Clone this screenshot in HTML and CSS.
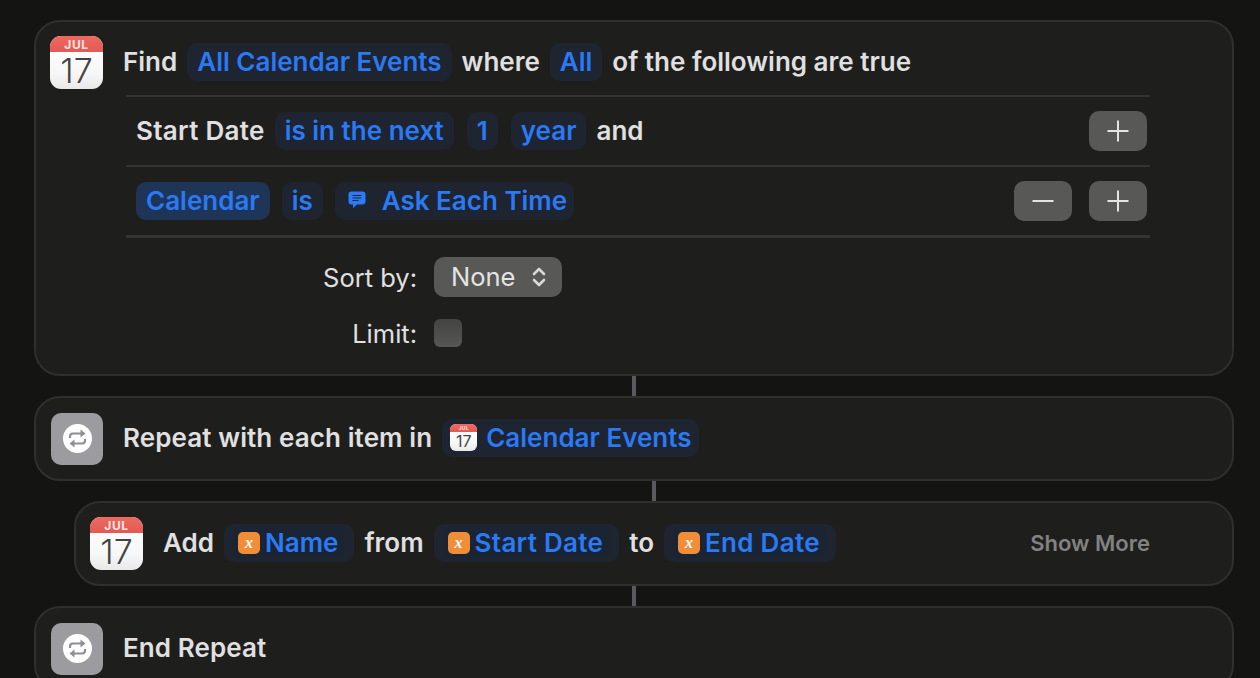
FILE: index.html
```html
<!DOCTYPE html>
<html lang="en">
<head>
    <meta charset="UTF-8">
    <meta name="viewport" content="width=device-width, initial-scale=1.0">
    <title>Shortcut</title>
    <link rel="stylesheet" href="styles.css">
</head>
<body>
    <div class="page">
        <!-- Find step -->
        <div class="card card-find">
            <div class="line line-head">
                <div class="cal">
                    <div class="cal-top">JUL</div>
                    <div class="cal-day">17</div>
                </div>
                <div class="words">
                    <span>Find</span>
                    <span class="chip">All Calendar Events</span>
                    <span>where</span>
                    <span class="chip">All</span>
                    <span>of the following are true</span>
                </div>
            </div>
            <div class="filters">
                <div class="filter">
                    <div class="words words-roomy">
                        <span class="wide">Start Date</span>
                        <span class="chip">is in the next</span>
                        <span class="chip">1</span>
                        <span class="chip">year</span>
                        <span>and</span>
                    </div>
                    <div class="buttons">
                        <button class="square-btn"><svg width="22" height="22" viewBox="0 0 22 22"><path d="M11 0.5v21M0.5 11h21" stroke="#e4e4e4" stroke-width="2"/></svg></button>
                    </div>
                </div>
                <div class="filter">
                    <div class="words">
                        <span class="chip chip-on">Calendar</span>
                        <span class="chip">is</span>
                        <span class="chip chip-ask">
                            <svg class="bubble" width="18" height="18" viewBox="0 0 18 18"><path d="M3.5 0.5h11a3 3 0 0 1 3 3v7a3 3 0 0 1-3 3H9l-4 3.8v-3.8H3.5a3 3 0 0 1-3-3v-7a3 3 0 0 1 3-3z" fill="#2c7bf6"/><path d="M4.5 4.5h9M4.5 7h9M4.5 9.5h6" stroke="#1e2532" stroke-width="1.1"/></svg>
                            Ask Each Time
                        </span>
                    </div>
                    <div class="buttons">
                        <button class="square-btn"><svg width="22" height="22" viewBox="0 0 22 22"><path d="M0.5 11h21" stroke="#e4e4e4" stroke-width="2"/></svg></button>
                        <button class="square-btn"><svg width="22" height="22" viewBox="0 0 22 22"><path d="M11 0.5v21M0.5 11h21" stroke="#e4e4e4" stroke-width="2"/></svg></button>
                    </div>
                </div>
            </div>
            <div class="option option-sort">
                <div class="option-label">Sort by:</div>
                <div class="select">
                    <span class="select-text">None</span>
                    <svg width="16" height="24" viewBox="0 0 16 24"><path d="M3 9l5-5 5 5M3 15l5 5 5-5" fill="none" stroke="#d8d8d8" stroke-width="2.6" stroke-linecap="round" stroke-linejoin="round"/></svg>
                </div>
            </div>
            <div class="option option-limit">
                <div class="option-label">Limit:</div>
                <div class="checkbox"></div>
            </div>
        </div>

        <div class="link"></div>

        <div class="card">
            <div class="line">
                <div class="repeat-icon">
                    <svg width="29" height="29" viewBox="0 0 29 29"><circle cx="14.5" cy="14.5" r="14.5" fill="#fff"/><path d="M7 14v-1.5a3 3 0 0 1 3-3h9" fill="none" stroke="#8e8e93" stroke-width="2.2"/><path d="M17.5 5.5l5 4-5 4z" fill="#8e8e93"/><path d="M22 15v1.5a3 3 0 0 1-3 3h-9" fill="none" stroke="#8e8e93" stroke-width="2.2"/><path d="M11.5 15.5l-5 4 5 4z" fill="#8e8e93"/></svg>
                </div>
                <div class="words">
                    <span class="step-title">Repeat with each item in</span>
                    <span class="chip chip-events">
                        <span class="cal cal-small">
                            <span class="cal-top">JUL</span>
                            <span class="cal-day">17</span>
                        </span>
                        Calendar Events
                    </span>
                </div>
            </div>
        </div>

        <div class="link link-nested"></div>

        <div class="card card-nested">
            <div class="line">
                <div class="cal">
                    <div class="cal-top">JUL</div>
                    <div class="cal-day">17</div>
                </div>
                <div class="words">
                    <span>Add</span>
                    <span class="chip"><span class="var-inner"><span class="var-icon">x</span>Name</span></span>
                    <span>from</span>
                    <span class="chip"><span class="var-inner wide"><span class="var-icon">x</span>Start Date</span></span>
                    <span>to</span>
                    <span class="chip"><span class="var-inner wide"><span class="var-icon">x</span>End Date</span></span>
                </div>
                <div class="show-more">Show More</div>
            </div>
        </div>

        <div class="link"></div>

        <div class="card">
            <div class="line">
                <div class="repeat-icon">
                    <svg width="29" height="29" viewBox="0 0 29 29"><circle cx="14.5" cy="14.5" r="14.5" fill="#fff"/><path d="M7 14v-1.5a3 3 0 0 1 3-3h9" fill="none" stroke="#8e8e93" stroke-width="2.2"/><path d="M17.5 5.5l5 4-5 4z" fill="#8e8e93"/><path d="M22 15v1.5a3 3 0 0 1-3 3h-9" fill="none" stroke="#8e8e93" stroke-width="2.2"/><path d="M11.5 15.5l-5 4 5 4z" fill="#8e8e93"/></svg>
                </div>
                <div class="words">
                    <span class="step-title">End Repeat</span>
                </div>
            </div>
        </div>
    </div>
</body>
</html>
```

FILE: styles.css
```css
* {
    box-sizing: border-box;
}
html, body {
    height: 100%;
    overflow: hidden;
}
body {
    margin: 0;
    background-color: #141413;
    font-family: Inter, 'Liberation Sans', sans-serif;
    font-size: 26px;
    font-weight: 600;
    color: #e0e0e0;
}
.page {
    padding: 20px 26px 0 34px;
}
.card {
    height: 85px;
    background-color: #1e1e1d;
    border: 2px solid #2f2f2e;
    border-radius: 26px;
    padding: 0 14px;
    display: flex;
    align-items: center;
}
.card-find {
    display: block;
    height: 356px;
    padding-top: 14px;
}
.card-nested {
    margin-left: 40px;
}
.link {
    width: 4px;
    height: 20px;
    margin-left: 598px;
    background-color: #5a5a5e;
}
.link-nested {
    margin-left: 618px;
}
.line {
    display: flex;
    align-items: center;
    width: 100%;
}
.line-head {
    height: 53px;
}
.words {
    display: flex;
    align-items: center;
    gap: 10px;
    white-space: nowrap;
}
.line .words {
    margin-left: 20px;
    margin-bottom: 2px;
}
.filter .words > span {
    padding-bottom: 2px;
}
.step-title {
    letter-spacing: 0.1px;
}
.wide {
    letter-spacing: 0.3px;
}
.chip {
    display: flex;
    align-items: center;
    height: 38px;
    padding: 0 10px;
    border-radius: 10px;
    background-color: #1e2430;
    color: #2b7af5;
    font-weight: 600;
}
.chip + .chip {
    margin-left: 2px;
}
.words-roomy .chip + .chip {
    margin-left: 3px;
}
.chip-on {
    background-color: #1f3558;
}
.chip-ask {
    padding-left: 13px;
    padding-right: 7px;
}
.bubble {
    margin-right: 16px;
}
.chip-events {
    padding-left: 8px;
    padding-right: 8px;
}
.var-inner {
    display: flex;
    align-items: center;
    height: 29px;
    padding: 0 6px 0 4px;
    background-color: #1b2432;
    border-radius: 3px;
}
.var-icon {
    display: flex;
    align-items: center;
    justify-content: center;
    width: 22px;
    height: 22px;
    margin-right: 5px;
    border-radius: 5px;
    background-color: #ef8e37;
    color: #fff;
    font-family: 'Liberation Serif', serif;
    font-style: italic;
    font-weight: 700;
    font-size: 16px;
    letter-spacing: 0;
}
.cal {
    display: flex;
    flex-direction: column;
    flex: none;
    width: 53px;
    height: 53px;
    border-radius: 11px;
    background: linear-gradient(#ffffff, #f7f7f7 70%, #e9e9e9);
}
.cal-top {
    display: block;
    height: 16px;
    line-height: 17px;
    text-align: center;
    border-radius: 11px 11px 0 0;
    background: linear-gradient(#ee6a60, #e25a53);
    color: #fbe6e3;
    font-size: 12px;
    font-weight: 700;
    letter-spacing: 0.6px;
}
.cal-day {
    display: block;
    text-align: center;
    line-height: 37px;
    color: #444;
    font-size: 34px;
    font-weight: 300;
}
.cal-small {
    width: 27px;
    height: 27px;
    margin-right: 9px;
    border-radius: 6px;
}
.cal-small .cal-top {
    height: 8px;
    line-height: 8px;
    border-radius: 6px 6px 0 0;
    font-size: 5px;
    letter-spacing: 0.2px;
}
.cal-small .cal-day {
    line-height: 19px;
    font-size: 16px;
    font-weight: 400;
}
.repeat-icon {
    display: flex;
    align-items: center;
    justify-content: center;
    flex: none;
    width: 52px;
    height: 52px;
    margin-left: 1px;
    border-radius: 10px;
    background-color: #9b9ba0;
}
.filters {
    width: 1024px;
    margin: 6px 0 0 76px;
    border-bottom: 3px solid #343433;
}
.filter {
    display: flex;
    align-items: center;
    justify-content: space-between;
    height: 70px;
    padding: 0 3px 0 10px;
    border-top: 2px solid #343433;
}
.buttons {
    display: flex;
    gap: 17px;
}
.square-btn {
    display: flex;
    align-items: center;
    justify-content: center;
    width: 58px;
    height: 40px;
    padding: 0;
    border: none;
    border-radius: 10px;
    background-color: #585857;
}
.option {
    display: flex;
    align-items: center;
    font-size: 25.5px;
    font-weight: 400;
}
.option-sort {
    margin-top: 19px;
}
.option-limit {
    height: 28px;
    margin-top: 22px;
}
.option-label {
    width: 367px;
    text-align: right;
    margin-right: 17px;
}
.select {
    display: flex;
    align-items: center;
    justify-content: space-between;
    width: 128px;
    height: 40px;
    padding: 0 15px 0 17px;
    border-radius: 10px;
    background-color: #585857;
    color: #e4e4e4;
}
.select-text {
    padding-bottom: 2px;
}
.checkbox {
    width: 28px;
    height: 28px;
    border-radius: 6px;
    background: linear-gradient(#444443, #565655);
}
.show-more {
    margin-left: auto;
    margin-bottom: 2px;
    padding-right: 68px;
    color: #828282;
    font-size: 22px;
    font-weight: 600;
}
```
